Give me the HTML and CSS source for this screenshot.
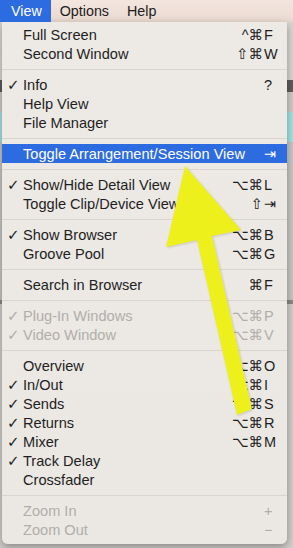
FILE: index.html
```html
<!DOCTYPE html>
<html lang="en">
<head>
  <meta charset="UTF-8" />
  <meta name="viewport" content="width=device-width, initial-scale=1.0"/>
  <title>View Menu</title>
  <link rel="stylesheet" href="styles.css">
</head>
<body>

  <div class="menubar">
    <span class="menubar-item active">View</span>
    <span class="menubar-item">Options</span>
    <span class="menubar-item">Help</span>
  </div>

  <div class="menu">
    <div class="item"><span class="check"></span><span class="label">Full Screen</span><span class="mods">^⌘</span><span class="key">F</span></div>
    <div class="item"><span class="check"></span><span class="label">Second Window</span><span class="mods">⇧⌘</span><span class="key">W</span></div>
    <div class="sep"></div>
    <div class="item"><span class="check">✓</span><span class="label">Info</span><span class="mods"></span><span class="key">?</span></div>
    <div class="item"><span class="check"></span><span class="label">Help View</span><span class="mods"></span><span class="key"></span></div>
    <div class="item"><span class="check"></span><span class="label">File Manager</span><span class="mods"></span><span class="key"></span></div>
    <div class="sep"></div>
    <div class="item selected"><span class="check"></span><span class="label">Toggle Arrangement/Session View</span><span class="mods"></span><span class="key">⇥</span></div>
    <div class="sep"></div>
    <div class="item"><span class="check">✓</span><span class="label">Show/Hide Detail View</span><span class="mods">⌥⌘</span><span class="key">L</span></div>
    <div class="item"><span class="check"></span><span class="label">Toggle Clip/Device View</span><span class="mods">⇧</span><span class="key">⇥</span></div>
    <div class="sep"></div>
    <div class="item"><span class="check">✓</span><span class="label">Show Browser</span><span class="mods">⌥⌘</span><span class="key">B</span></div>
    <div class="item"><span class="check"></span><span class="label">Groove Pool</span><span class="mods">⌥⌘</span><span class="key">G</span></div>
    <div class="sep"></div>
    <div class="item"><span class="check"></span><span class="label">Search in Browser</span><span class="mods">⌘</span><span class="key">F</span></div>
    <div class="sep"></div>
    <div class="item disabled"><span class="check">✓</span><span class="label">Plug-In Windows</span><span class="mods">⌥⌘</span><span class="key">P</span></div>
    <div class="item disabled"><span class="check">✓</span><span class="label">Video Window</span><span class="mods">⌥⌘</span><span class="key">V</span></div>
    <div class="sep"></div>
    <div class="item"><span class="check"></span><span class="label">Overview</span><span class="mods">⌥⌘</span><span class="key">O</span></div>
    <div class="item"><span class="check">✓</span><span class="label">In/Out</span><span class="mods">⌥⌘</span><span class="key">I</span></div>
    <div class="item"><span class="check">✓</span><span class="label">Sends</span><span class="mods">⌥⌘</span><span class="key">S</span></div>
    <div class="item"><span class="check">✓</span><span class="label">Returns</span><span class="mods">⌥⌘</span><span class="key">R</span></div>
    <div class="item"><span class="check">✓</span><span class="label">Mixer</span><span class="mods">⌥⌘</span><span class="key">M</span></div>
    <div class="item"><span class="check">✓</span><span class="label">Track Delay</span><span class="mods"></span><span class="key"></span></div>
    <div class="item"><span class="check"></span><span class="label">Crossfader</span><span class="mods"></span><span class="key"></span></div>
    <div class="sep"></div>
    <div class="item disabled"><span class="check"></span><span class="label">Zoom In</span><span class="mods"></span><span class="key">+</span></div>
    <div class="item disabled"><span class="check"></span><span class="label">Zoom Out</span><span class="mods"></span><span class="key">−</span></div>
  </div>

  <!-- yellow annotation arrow drawn over the menu -->
  <svg class="arrow" width="293" height="548" viewBox="0 0 293 548">
    <polygon points="185,166 241,230 212,236 252,409 237,415 197,240 166,247" fill="#eef01c" />
  </svg>

</body>
</html>
```

FILE: styles.css
```css
body {
  margin: 0;
  padding: 0;
  width: 293px;
  height: 548px;
  overflow: hidden;
  position: relative;
  font-family: "Helvetica Neue", "Liberation Sans", Arial, sans-serif;
  background: linear-gradient(to bottom,
    #d9d6d2 0, #d9d6d2 80px,
    #5e5c5a 80px, #5e5c5a 92px,
    #cfccc8 92px, #cfccc8 112px,
    #a3e3e2 112px, #a3e3e2 142px,
    #c9c6c2 142px, #c9c6c2 300px,
    #8b8986 300px, #8b8986 304px,
    #d1cecb 304px);
}

.menubar {
  height: 22px;
  display: flex;
  align-items: stretch;
  background: linear-gradient(to bottom, #f3e6df, #ead9d0);
  font-size: 14.3px;
  color: #1c1c1c;
}

.menubar-item {
  display: flex;
  align-items: center;
  padding: 0 9px 0 9px;
}

.menubar-item.active {
  background-color: #2d6ce0;
  color: #fff;
  padding: 0 9px 0 11px;
}

.menu {
  margin-left: 2px;
  width: 285px;
  padding: 3px 0 5px;
  background: linear-gradient(to bottom, #edeae6, #ebe8e3);
  border-radius: 0 0 6px 6px;
  box-shadow: 0 3px 8px rgba(0, 0, 0, 0.35);
  color: #1e1e1e;
  font-size: 14.6px;
}

.item {
  height: 19px;
  display: grid;
  grid-template-columns: 21px 1fr auto 16px;
  align-items: center;
  padding-right: 8px;
  white-space: nowrap;
}

.item.selected {
  background-color: #2d6ce0;
  color: #fff;
}

.item.disabled {
  color: #b0aeaa;
}

.check {
  font-family: "DejaVu Sans", sans-serif;
  font-size: 15px;
  padding-left: 5px;
}

.mods,
.key {
  font-family: "Liberation Sans", "DejaVu Sans", sans-serif;
  font-size: 14.5px;
}

.mods {
  text-align: right;
}

.key {
  padding-left: 1px;
}

.sep {
  height: 12px;
  display: flex;
  align-items: center;
}

.sep::after {
  content: "";
  display: block;
  width: 100%;
  height: 1px;
  background-color: #d8d5d0;
}

.arrow {
  position: absolute;
  top: 0;
  left: 0;
  pointer-events: none;
  filter: drop-shadow(1px 1px 1px rgba(0, 0, 0, 0.15));
}
```
